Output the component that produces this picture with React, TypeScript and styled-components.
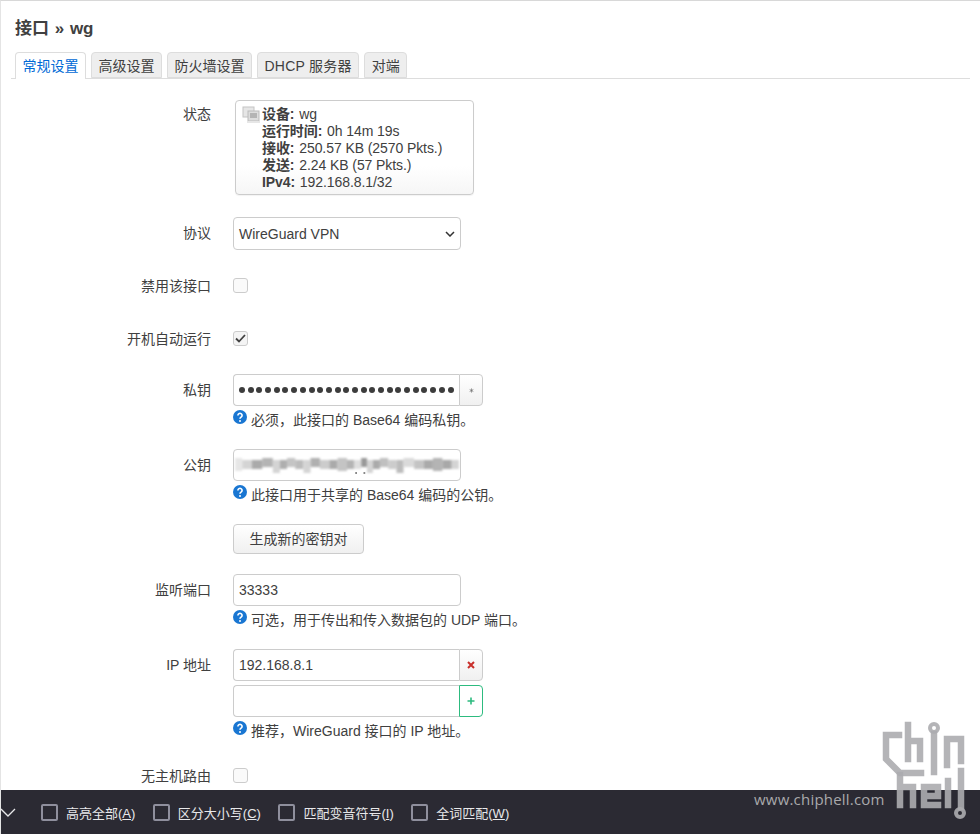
import React from 'react';
import styled, { createGlobalStyle } from 'styled-components';

const GlobalStyle = createGlobalStyle`
  html, body {
    margin: 0;
    height: 100%;
    overflow: hidden;
    background: #fff;
  }
  body {
    font-family: "Liberation Sans", "Noto Sans CJK SC", sans-serif;
    font-size: 14px;
    color: #404040;
  }
`;

const Page = styled.div`
  position: relative;
  height: 834px;
  box-sizing: border-box;
  padding: 19px 10px 0 10px;
  border-top: 1px solid #d8d8d8;
  border-left: 1px solid #e4e4e4;
  overflow: hidden;
`;

const Title = styled.h2`
  margin: 0 0 0 4px;
  font-size: 17px;
  line-height: 18px;
  font-weight: 700;
  word-spacing: 1px;
  color: #404040;
`;

const Tabs = styled.ul`
  display: flex;
  gap: 5px;
  margin: 14px 0 0;
  padding: 0 0 0 4px;
  list-style: none;
  border-bottom: 1px solid #ddd;
  height: 26px;
`;

const Tab = styled.li<{ $active?: boolean; $spaced?: boolean }>`
  box-sizing: border-box;
  height: ${p => (p.$active ? 27 : 26)}px;
  padding: 0 6.5px;
  line-height: 27px;
  font-size: 14px;
  letter-spacing: ${p => (p.$spaced ? 0.25 : 0)}px;
  border: 1px solid #ddd;
  border-bottom: ${p => (p.$active ? 'none' : '1px solid #ddd')};
  border-radius: 4px 4px 0 0;
  background: ${p => (p.$active ? '#fff' : '#eee')};
  color: ${p => (p.$active ? '#0069d6' : '#404040')};
`;

const Form = styled.div`
  display: flex;
  flex-direction: column;
`;

const Row = styled.div<{ $top: number }>`
  display: flex;
  margin-top: ${p => p.$top}px;
`;

const Label = styled.div<{ $offset?: number }>`
  width: 200px;
  flex: none;
  text-align: right;
  line-height: 20px;
  padding-top: ${p => p.$offset ?? 6}px;
`;

const Field = styled.div`
  margin-left: 22px;
  display: flex;
  flex-direction: column;
`;

const StatusBox = styled.div`
  box-sizing: border-box;
  display: flex;
  width: 239px;
  height: 95px;
  margin-left: 2px;
  padding: 5px 6px;
  border: 1px solid #ccc;
  border-radius: 4px;
  background: linear-gradient(#fff 70%, #f6f6f6);
  box-shadow: 0 1px 1px rgba(0, 0, 0, 0.05);
`;

const StatusIcon = styled.svg`
  flex: none;
  width: 18px;
  height: 18px;
  margin: 0 2px 0 0;
`;

const StatusLines = styled.div`
  line-height: 17px;
  letter-spacing: -0.08px;
  white-space: nowrap;
  b {
    font-weight: 700;
    margin-right: 1px;
  }
`;

const Input = styled.div<{ $joined?: boolean; $flush?: boolean }>`
  box-sizing: border-box;
  width: ${p => (p.$joined ? 226 : 228)}px;
  height: 32px;
  padding: 0 ${p => (p.$flush ? 0 : 5)}px;
  line-height: 30px;
  border: 1px solid #ccc;
  border-radius: ${p => (p.$joined ? '4px 0 0 4px' : '4px')};
  border-right-width: ${p => (p.$joined ? 0 : 1)}px;
  background: #fff;
  overflow: hidden;
  white-space: nowrap;
  color: #404040;
`;

const SelectBox = styled(Input)`
  display: flex;
  justify-content: space-between;
  align-items: center;
  height: 33px;
  padding-right: 5px;
`;

const Joined = styled.div`
  display: flex;
  & + & {
    margin-top: 4px;
  }
`;

const Addon = styled.div<{ $color?: string }>`
  box-sizing: border-box;
  width: 24px;
  height: 32px;
  display: flex;
  align-items: center;
  justify-content: center;
  border: 1px solid ${p => p.$color ?? '#ccc'};
  border-radius: 0 4px 4px 0;
  background: ${p => (p.$color ? '#fff' : 'linear-gradient(#fff, #f0f0f0)')};
`;

const Dots = styled.div`
  display: flex;
  gap: 2.7px;
  height: 30px;
  align-items: center;
`;

const Dot = styled.span`
  width: 6px;
  height: 6px;
  border-radius: 50%;
  background: #3c3c3c;
  flex: none;
`;

const Blurred = styled.svg`
  display: block;
  width: 226px;
  height: 30px;
`;

const Checkbox = styled.div<{ $checked?: boolean }>`
  box-sizing: border-box;
  width: 15px;
  height: 15px;
  border: 1px solid #ccc;
  border-radius: 3px;
  background: ${p => (p.$checked ? '#f4f4f4' : '#fafafa')};
  display: flex;
  align-items: center;
  justify-content: center;
`;

const CheckRow = styled(Row)`
  align-items: center;
  height: 15px;
`;

const CheckLabel = styled.div`
  width: 200px;
  flex: none;
  text-align: right;
  line-height: 20px;
`;

const Help = styled.div`
  display: flex;
  align-items: flex-start;
  height: 20px;
  margin-top: 4px;
  line-height: 20px;
  white-space: nowrap;
`;

const HelpIcon = styled.svg`
  flex: none;
  width: 14px;
  height: 14px;
  margin: 0 4px 0 0;
`;

const Button = styled.div`
  box-sizing: border-box;
  width: 131px;
  height: 30px;
  line-height: 28px;
  text-align: center;
  border: 1px solid #ccc;
  border-radius: 4px;
  background: linear-gradient(#fff, #f0f0f0);
`;

const FindBar = styled.div`
  position: absolute;
  left: -1px;
  right: 0;
  bottom: 0;
  height: 44px;
  background: #2b2a33;
  display: flex;
  align-items: center;
  color: #e8e8ea;
  font-size: 13px;
`;

const Chevron = styled.svg`
  width: 16px;
  height: 16px;
  margin: 0 25px 0 0;
  flex: none;
`;

const FindOption = styled.div`
  display: flex;
  align-items: center;
  gap: 8px;
  margin-right: 17.5px;
  u {
    text-underline-offset: 1px;
  }
`;

const FindCheck = styled.span`
  box-sizing: border-box;
  width: 17px;
  height: 17px;
  border: 2px solid #8f8f9d;
  border-radius: 2px;
`;

const Site = styled.div`
  position: absolute;
  left: 753px;
  top: 788px;
  font-family: "Open Sans", sans-serif;
  font-size: 15px;
  line-height: 20px;
  color: #a9a9ab;
  letter-spacing: 0.2px;
`;

const Mark = styled.svg`
  position: absolute;
  left: 874px;
  top: 714px;
  width: 95px;
  height: 105px;
`;

const blurCells = [
  ['#e6e6e6', 6], ['#d4d4d4', 8], ['#aaa', 9], ['#b4b4b4', 9], ['#d4d4d4', 6], ['#aeaeae', 6], ['#c4c4c4', 7], ['#bcbcbc', 7],
  ['#d4d4d4', 6], ['#b0b0b0', 8], ['#ccc', 8], ['#aaa', 7], ['#c4c4c4', 8], ['#b4b4b4', 6], ['#dedede', 6], ['#999', 5],
  ['#d4d4d4', 5], ['#aaa', 6], ['#c0c0c0', 7], ['#ccc', 7], ['#bcbcbc', 6], ['#dadada', 9], ['#c4c4c4', 8], ['#aaa', 8],
  ['#b4b4b4', 8], ['#a8a8a8', 8], ['#d4d4d4', 6],
] as const;

function BlurredKey() {
  let x = 1;
  return (
    <Blurred viewBox="0 0 192 30" preserveAspectRatio="none">
      <defs>
        <filter id="key-blur">
          <feGaussianBlur stdDeviation="0.9" />
        </filter>
      </defs>
      <g filter="url(#key-blur)">
        {blurCells.map(([fill, w], i) => {
          const rect = <rect key={i} x={x} y={i % 3 === 0 ? 8 : 10} width={w} height={i % 4 === 0 ? 13 : 9} fill={fill} />;
          x += w;
          return rect;
        })}
      </g>
      <rect x="103" y="22" width="1.5" height="2" fill="#888" />
      <rect x="110" y="22" width="1.5" height="2" fill="#888" />
    </Blurred>
  );
}

const HelpMark = () => (
  <HelpIcon viewBox="0 0 14 14">
    <circle cx="7" cy="7" r="7" fill="#1976d2" />
    <path d="M4.9 5.4a2.1 2 0 1 1 3.2 1.7c-.7.5-1.1.8-1.1 1.6" fill="none" stroke="#fff" strokeWidth="1.6" />
    <circle cx="7" cy="10.9" r="1" fill="#fff" />
  </HelpIcon>
);

const HelpText = ({ children }: { children: React.ReactNode }) => (
  <Help>
    <HelpMark />
    <span>{children}</span>
  </Help>
);

export default function App() {
  return (
    <Page>
      <GlobalStyle />
      <Title>接口 » wg</Title>
      <Tabs>
        <Tab $active>常规设置</Tab>
        <Tab>高级设置</Tab>
        <Tab>防火墙设置</Tab>
        <Tab $spaced>DHCP 服务器</Tab>
        <Tab>对端</Tab>
      </Tabs>
      <Form>
        <Row $top={21}>
          <Label $offset={4}>状态</Label>
          <Field>
            <StatusBox>
              <StatusIcon viewBox="0 0 18 18">
                <rect x="1" y="1" width="11" height="10" fill="#e6e6e6" stroke="#c4c4c4" />
                <rect x="6" y="5" width="11" height="10" fill="#ddd" stroke="#bbb" />
                <rect x="8" y="7" width="7" height="5" fill="#b4b4b4" />
                <rect x="5" y="15" width="13" height="2" fill="#e6e6e6" />
              </StatusIcon>
              <StatusLines>
                <div><b>设备:</b> wg</div>
                <div><b>运行时间:</b> 0h 14m 19s</div>
                <div><b>接收:</b> 250.57 KB (2570 Pkts.)</div>
                <div><b>发送:</b> 2.24 KB (57 Pkts.)</div>
                <div><b>IPv4:</b> 192.168.8.1/32</div>
              </StatusLines>
            </StatusBox>
          </Field>
        </Row>
        <Row $top={22}>
          <Label>协议</Label>
          <Field>
            <SelectBox>
              WireGuard VPN
              <svg width="10" height="6" viewBox="0 0 10 6">
                <path d="M1 1l4 4 4-4" fill="none" stroke="#333" strokeWidth="1.5" />
              </svg>
            </SelectBox>
          </Field>
        </Row>
        <CheckRow $top={28}>
          <CheckLabel>禁用该接口</CheckLabel>
          <Field>
            <Checkbox />
          </Field>
        </CheckRow>
        <CheckRow $top={38}>
          <CheckLabel>开机自动运行</CheckLabel>
          <Field>
            <Checkbox $checked>
              <svg width="11" height="9" viewBox="0 0 11 9">
                <path d="M1 4.5l3 3 6-6.5" fill="none" stroke="#404040" strokeWidth="1.8" />
              </svg>
            </Checkbox>
          </Field>
        </CheckRow>
        <Row $top={28}>
          <Label>私钥</Label>
          <Field>
            <Joined>
              <Input $joined>
                <Dots>
                  {Array.from({ length: 25 }, (_, i) => <Dot key={i} />)}
                </Dots>
              </Input>
              <Addon>
                <svg width="5" height="5" viewBox="0 0 6 6">
                  <path d="M3 .5v5M.8 1.8l4.4 2.4M5.2 1.8L.8 4.2" stroke="#777" strokeWidth="0.9" />
                </svg>
              </Addon>
            </Joined>
            <HelpText>必须，此接口的 Base64 编码私钥。</HelpText>
          </Field>
        </Row>
        <Row $top={19}>
          <Label>公钥</Label>
          <Field>
            <Input $flush>
              <BlurredKey />
            </Input>
            <HelpText>此接口用于共享的 Base64 编码的公钥。</HelpText>
          </Field>
        </Row>
        <Row $top={19}>
          <Label />
          <Field>
            <Button>生成新的密钥对</Button>
          </Field>
        </Row>
        <Row $top={20}>
          <Label>监听端口</Label>
          <Field>
            <Input>33333</Input>
            <HelpText>可选，用于传出和传入数据包的 UDP 端口。</HelpText>
          </Field>
        </Row>
        <Row $top={19}>
          <Label>IP 地址</Label>
          <Field>
            <Joined>
              <Input $joined>192.168.8.1</Input>
              <Addon>
                <svg width="8" height="8" viewBox="0 0 8 8">
                  <path d="M1 1l6 6M7 1l-6 6" stroke="#c9302c" strokeWidth="2" />
                </svg>
              </Addon>
            </Joined>
            <Joined>
              <Input $joined />
              <Addon $color="#2dbb7f">
                <svg width="8" height="8" viewBox="0 0 8 8">
                  <path d="M4 .5v7M.5 4h7" stroke="#2dbb7f" strokeWidth="1.6" />
                </svg>
              </Addon>
            </Joined>
            <HelpText>推荐，WireGuard 接口的 IP 地址。</HelpText>
          </Field>
        </Row>
        <CheckRow $top={27}>
          <CheckLabel>无主机路由</CheckLabel>
          <Field>
            <Checkbox />
          </Field>
        </CheckRow>
      </Form>
      <FindBar>
        <Chevron viewBox="0 0 16 16">
          <path d="M1 5l7 7 7-7" fill="none" stroke="#e8e8ea" strokeWidth="1.3" />
        </Chevron>
        <FindOption><FindCheck /><span>高亮全部(<u>A</u>)</span></FindOption>
        <FindOption><FindCheck /><span>区分大小写(<u>C</u>)</span></FindOption>
        <FindOption><FindCheck /><span>匹配变音符号(<u>I</u>)</span></FindOption>
        <FindOption><FindCheck /><span>全词匹配(<u>W</u>)</span></FindOption>
      </FindBar>
      <Site>www.chiphell.com</Site>
      <Mark viewBox="0 0 95 105" fill="none" strokeLinecap="square">
        <defs>
          <filter id="mark-soft">
            <feGaussianBlur stdDeviation="0.4" />
          </filter>
        </defs>
        <g stroke="rgba(172,172,175,0.9)" strokeWidth="6.5" filter="url(#mark-soft)">
          <path d="M24 20H11V44L25 58H46" />
          <path d="M33 10V44M33 26H45V44" />
          <circle cx="59" cy="13" r="4" strokeWidth="4" />
          <path d="M59 19V57" />
          <path d="M72 24H86V46M72 24V50" />
          <path d="M86 56V92" />
          <circle cx="85" cy="98" r="4" strokeWidth="4" />
          <path d="M25 60V90M25 72H38V90" />
          <path d="M49 90V72H63V81H49M49 90H63" />
          <path d="M73 66V90" />
        </g>
      </Mark>
    </Page>
  );
}
